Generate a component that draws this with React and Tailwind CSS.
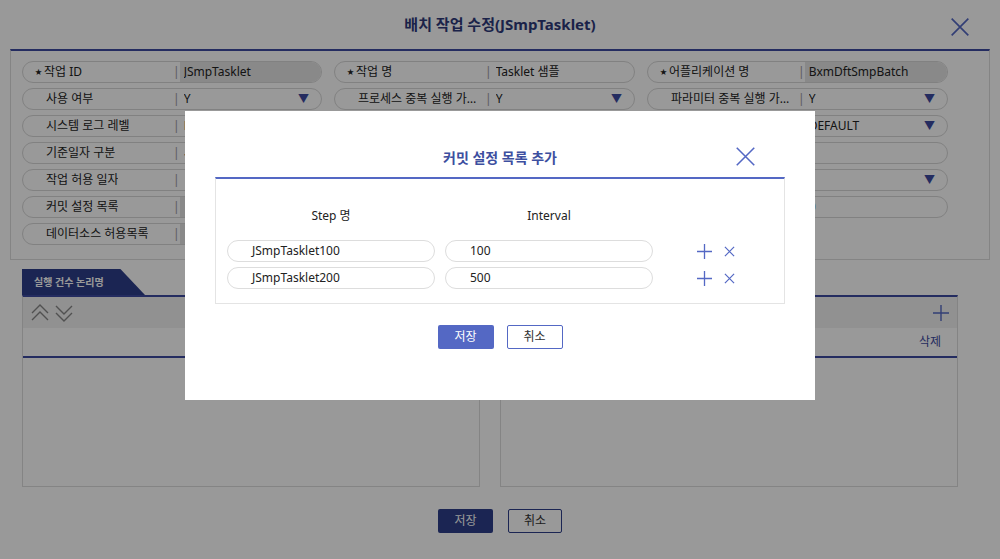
import React from "react";

const font = { fontFamily: '"Noto Sans", "Noto Sans CJK KR", sans-serif' };

const Field = ({ label, req, value, select, gray }) => (
  <div className="flex items-center h-[22px] rounded-full border border-[#d8d8d8] bg-white text-[12px] text-[#222] overflow-hidden">
    <div className="w-[150px] pl-3 flex items-center overflow-hidden whitespace-nowrap">
      {req ? <span className="text-[7px] mr-[2px]">★</span> : <span className="w-[11px] shrink-0" />}
      <span className="truncate">{label}</span>
    </div>
    <span className="text-[#999]">|</span>
    <div className={`flex-1 h-full flex items-center pl-1 pr-3 ${gray ? "bg-[#e4e4e4]" : ""}`}>
      <span className="flex-1 truncate">{value}</span>
      {select ? <span className="text-[#3d4aa0] text-[11px]">▼</span> : null}
    </div>
  </div>
);

const X = ({ s = 12, w = 1.3 }) => (
  <svg width={s} height={s} viewBox="0 0 12 12" stroke="#5468c4" strokeWidth={w}>
    <path d="M1 1L11 11M11 1L1 11" />
  </svg>
);
const Plus = ({ s = 16 }) => (
  <svg width={s} height={s} viewBox="0 0 16 16" stroke="#5468c4" strokeWidth="1.4">
    <path d="M8 0V16M0 8H16" />
  </svg>
);

export default function App() {
  const cols = [
    [
      ["작업 ID", 1, "JSmpTasklet", 0, 1],
      ["사용 여부", 0, "Y", 1],
      ["시스템 로그 레벨", 0, "DEBUG", 1],
      ["기준일자 구분", 0, "시스템일자", 0],
      ["작업 허용 일자", 0, "", 0],
      ["커밋 설정 목록", 0, "", 0, 1],
      ["데이터소스 허용목록", 0, "", 0, 1],
    ],
    [
      ["작업 명", 1, "Tasklet 샘플"],
      ["프로세스 중복 실행 가능…", 0, "Y", 1],
      ["", 0, ""],
      ["", 0, ""],
      ["", 0, ""],
    ],
    [
      ["어플리케이션 명", 1, "BxmDftSmpBatch", 0, 1],
      ["파라미터 중복 실행 가능…", 0, "Y", 1],
      ["로그 파일", 0, "DEFAULT", 1],
      ["", 0, ""],
      ["", 0, "", 1],
      ["", 0, "0"],
    ],
  ];
  return (
    <div className="relative w-[1000px] h-[559px] bg-white overflow-hidden" style={font}>
      <div className="h-[49px] flex items-center justify-center relative">
        <span className="text-[15px] font-bold text-[#2e3a7a]">배치 작업 수정(JSmpTasklet)</span>
        <div className="absolute right-[30px] top-[17px]"><X s={20} w={1} /></div>
      </div>
      <div className="mx-[10px] border-t-2 border-[#3d4aa0] border-x border-b border-x-[#ddd] border-b-[#ddd] h-[211px] px-[11px] pt-[10px] grid grid-cols-[300px_301px_301px] gap-x-[12px] content-start">
        {cols.map((c, i) => (
          <div key={i} className="flex flex-col gap-[5px]">
            {c.map((f, j) => <Field key={j} label={f[0]} req={f[1]} value={f[2]} select={f[3]} gray={f[4]} />)}
          </div>
        ))}
      </div>
      <div className="mt-[9px] px-[22px] flex gap-[20px]">
        {[0, 1].map((k) => (
          <div key={k} className="w-[458px]">
            <div className="h-[26px]">
              {k === 0 && (
                <div className="w-[123px] h-full bg-[#2e3f8a] text-white text-[10px] font-bold flex items-center pl-3" style={{ clipPath: "polygon(0 0,80% 0,100% 100%,0 100%)" }}>실행 건수 논리명</div>
              )}
            </div>
            <div className="border-t-2 border-[#3d4aa0] h-[192px] border-x border-b border-x-[#ddd] border-b-[#ddd] flex flex-col">
              <div className="h-[31px] bg-[#f2f2f2] flex items-center px-2 justify-between">
                {k === 0 ? (
                  <svg width="48" height="18" viewBox="0 0 48 18" fill="none" stroke="#888" strokeWidth="1.4">
                    <path d="M1 9L9 1L17 9M1 16L9 8L17 16M25 2L33 10L41 2M25 9L33 17L41 9" />
                  </svg>
                ) : <span />}
                {k === 1 && <Plus s={16} />}
              </div>
              <div className="h-[30px] border-b-2 border-[#3d4aa0] flex items-center justify-end pr-4 text-[12px] text-[#3d4aa0]">{k === 1 ? "삭제" : ""}</div>
            </div>
          </div>
        ))}
      </div>
      <div className="mt-[22px] flex justify-center gap-[15px] text-[12px]">
        <div className="w-[55px] h-[24px] bg-[#2e3f8a] text-white flex items-center justify-center rounded-[2px]">저장</div>
        <div className="w-[54px] h-[24px] border border-[#2e3f8a] text-[#333] flex items-center justify-center rounded-[2px]">취소</div>
      </div>

      <div className="absolute inset-0 bg-black/40" />

      <div className="absolute left-[185px] top-[111px] w-[630px] h-[289px] bg-white px-[30px]">
        <div className="h-[66px] flex items-center justify-center relative">
          <span className="text-[14px] font-bold text-[#3d4fa0] mt-[26px]">커밋 설정 목록 추가</span>
          <div className="absolute right-[29px] top-[35px]"><X s={21} w={0.9} /></div>
        </div>
        <div className="border-t-2 border-[#5468c4] border-x border-b border-x-[#e4e4e4] border-b-[#e4e4e4] h-[127px] px-[11px] pt-[27px] text-[12px] text-[#222]">
          <div className="flex h-[20px] items-center">
            <span className="w-[208px] text-center">Step 명</span>
            <span className="ml-[10px] w-[208px] text-center">Interval</span>
          </div>
          <div className="mt-[14px] flex flex-col gap-[5px]">
            {[["JSmpTasklet100", "100"], ["JSmpTasklet200", "500"]].map((r) => (
              <div key={r[0]} className="flex items-center">
                <div className="w-[208px] h-[22px] rounded-full border border-[#ddd] pl-6 flex items-center">{r[0]}</div>
                <div className="ml-[10px] w-[208px] h-[22px] rounded-full border border-[#ddd] pl-6 flex items-center">{r[1]}</div>
                <div className="ml-[44px] flex items-center gap-[12px]"><Plus s={15} /><X s={11} /></div>
              </div>
            ))}
          </div>
        </div>
        <div className="mt-[21px] flex justify-center gap-[13px] text-[12px]">
          <div className="w-[56px] h-[24px] bg-[#5468c4] text-white flex items-center justify-center rounded-[2px]">저장</div>
          <div className="w-[56px] h-[24px] border border-[#5468c4] text-[#333] flex items-center justify-center rounded-[2px]">취소</div>
        </div>
      </div>
    </div>
  );
}
